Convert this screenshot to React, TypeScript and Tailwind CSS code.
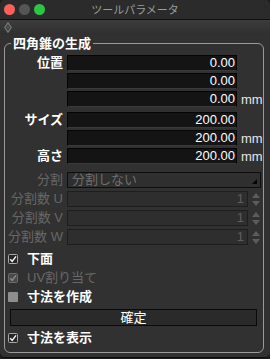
const FONT = "font-['Liberation_Sans','Noto_Sans_CJK_JP',sans-serif]";

const Label = ({ text, disabled }: { text: string; disabled?: boolean }) => (
  <div
    className={`w-[58px] shrink-0 text-right text-[13px] leading-[16px] whitespace-nowrap ${
      disabled ? "text-[#676767]" : "font-bold text-white"
    }`}
  >
    {text}
  </div>
);

const ValueRow = ({ label, value, unit }: { label?: string; value: string; unit?: boolean }) => (
  <div className="flex items-center h-[16px] gap-[4px]">
    <Label text={label ?? ""} />
    <div className="w-[170px] h-[16px] bg-[#141414] border border-[#050505] border-b-[#3a3a3a] text-right text-white text-[13px] leading-[14px] pr-[1px]">
      {value}
    </div>
    {unit && <span className="text-[13px] leading-[16px] text-[#e6e6e6] pt-[2px]">mm</span>}
  </div>
);

const Spinner = () => (
  <svg width="10" height="15" viewBox="0 0 10 15" className="ml-[3px]">
    <path d="M5 1 L9 6 L1 6 Z" fill="#5c5c5c" />
    <path d="M1 9 L9 9 L5 14 Z" fill="#5c5c5c" />
  </svg>
);

const CountRow = ({ label }: { label: string }) => (
  <div className="flex items-center h-[16px] gap-[4px]">
    <Label text={label} disabled />
    <div className="flex items-center">
      <div className="w-[181px] h-[16px] bg-[#2e2e2e] border border-[#1e1e1e] text-right text-[#5e5e5e] text-[13px] leading-[14px] pr-[3px]">
        1
      </div>
      <Spinner />
    </div>
  </div>
);

type BoxKind = "checked" | "dim" | "empty";

const Check = ({ kind, text, disabled }: { kind: BoxKind; text: string; disabled?: boolean }) => (
  <div className="flex items-center h-[19px] pl-[3px] gap-[9px]">
    {kind === "empty" ? (
      <div className="w-[10px] h-[10px] bg-[#8e8e8e] rounded-[1px]" />
    ) : (
      <svg width="10" height="10" viewBox="0 0 10 10">
        <rect
          x="0.5"
          y="0.5"
          width="9"
          height="9"
          rx="1"
          fill={kind === "dim" ? "#4a4a4a" : "#262626"}
          stroke={kind === "dim" ? "#6a6a6a" : "#a8a8a8"}
        />
        <path
          d="M2.2 5.2 L4.2 7.4 L8 2.4"
          fill="none"
          stroke={kind === "dim" ? "#8a8a8a" : "#f2f2f2"}
          strokeWidth="1.5"
        />
      </svg>
    )}
    <span
      className={`text-[13px] leading-[16px] ${disabled ? "text-[#686868]" : "font-bold text-white"}`}
    >
      {text}
    </span>
  </div>
);

export default function App() {
  return (
    <div className={`w-[270px] h-[359px] bg-[#1c1c1c] ${FONT}`}>
      <div className="w-[270px] h-[358px] bg-[#313131] rounded-[5px] overflow-hidden border-b border-[#0c0c0c]">
        {/* title bar */}
        <div className="relative h-[20px] bg-[#2b2b2b] border-b border-[#111] flex items-center justify-center">
          <div className="absolute left-[4px] top-[4px] flex gap-[4px]">
            <div className="w-[11px] h-[11px] rounded-full bg-[#fe5f57]" />
            <div className="w-[11px] h-[11px] rounded-full bg-[#555555]" />
            <div className="w-[11px] h-[11px] rounded-full bg-[#29c840]" />
          </div>
          <span className="text-[11px] leading-[14px] text-[#9c9c9c]">ツールパラメータ</span>
        </div>

        {/* toolbar strip */}
        <div className="h-[15px] bg-gradient-to-b from-[#3c3c3c] to-[#2f2f2f] pl-[4px] pt-[2px]">
          <svg width="8" height="11" viewBox="0 0 8 11">
            <path d="M4 0.8 L7.2 5.5 L4 10.2 L0.8 5.5 Z" fill="none" stroke="#7a7a7a" strokeWidth="1.2" />
            <path d="M4 3.5 L5.4 5.5 L4 7.5 L2.6 5.5 Z" fill="#5a5a5a" />
          </svg>
        </div>

        <fieldset className="ml-[4px] w-[259px] h-[318px] border border-[#9a9a9a] rounded-[6px] pt-[3px]">
          <legend className="ml-[6px] px-[2px] text-[13px] leading-[17px] font-bold text-white">
            四角錐の生成
          </legend>

          <div className="flex flex-col gap-[2px]">
            <ValueRow label="位置" value="0.00" />
            <ValueRow value="0.00" />
            <ValueRow value="0.00" unit />
          </div>

          <div className="flex flex-col gap-[2px] mt-[5px]">
            <ValueRow label="サイズ" value="200.00" />
            <ValueRow value="200.00" unit />
            <ValueRow label="高さ" value="200.00" unit />
          </div>

          <div className="flex items-center h-[16px] gap-[4px] mt-[8px]">
            <Label text="分割" disabled />
            <div className="relative w-[194px] h-[16px] bg-[#2f2f2f] border border-[#0e0e0e] text-[13px] leading-[14px] text-[#6e6e6e] pl-[4px]">
              分割しない
              <svg width="5" height="5" viewBox="0 0 5 5" className="absolute right-[3px] bottom-[3px]">
                <path d="M5 0 L5 5 L0 5 Z" fill="#050505" />
              </svg>
            </div>
          </div>

          <div className="flex flex-col gap-[3px] mt-[3px]">
            <CountRow label="分割数 U" />
            <CountRow label="分割数 V" />
            <CountRow label="分割数 W" />
          </div>

          <div className="flex flex-col mt-[4px]">
            <Check kind="checked" text="下面" />
            <Check kind="dim" text="UV割り当て" disabled />
            <Check kind="empty" text="寸法を作成" />
          </div>

          <div className="ml-[5px] mt-[3px] w-[247px] h-[17px] bg-[#2a2a2a] border border-[#0a0a0a] text-center text-[13px] leading-[15px] text-white">
            確定
          </div>

          <div className="mt-[2px]">
            <Check kind="checked" text="寸法を表示" />
          </div>
        </fieldset>
      </div>
    </div>
  );
}
